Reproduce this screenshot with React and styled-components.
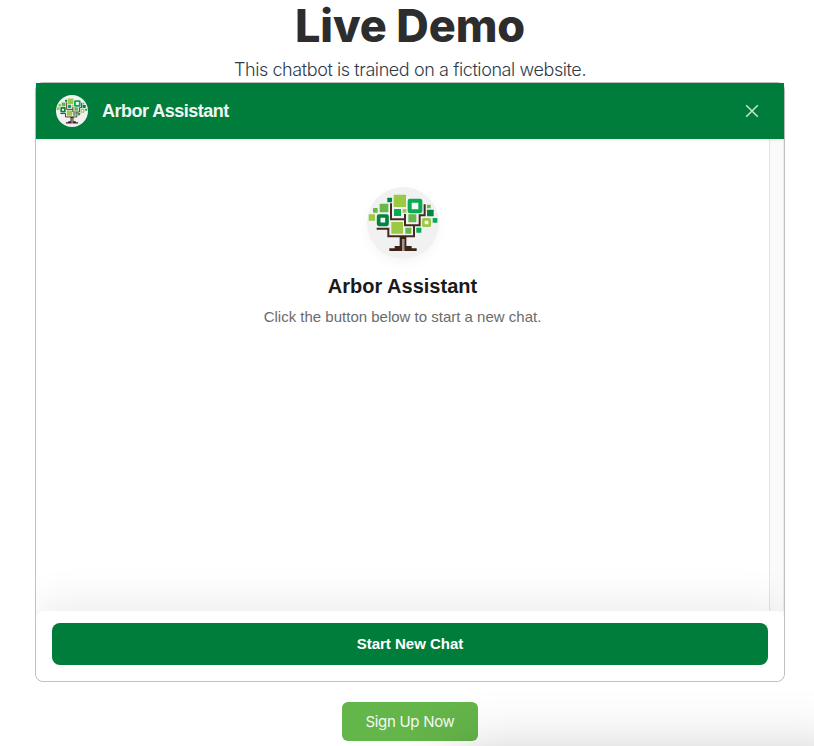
import React from "react";
import styled, { createGlobalStyle } from "styled-components";

const GlobalStyle = createGlobalStyle`
  * { box-sizing: border-box; }
  html, body { margin: 0; padding: 0; background: #fff; overflow: hidden; }
  h1, h2, p { margin: 0; }
  button { border: 0; padding: 0; font: inherit; cursor: pointer; }
`;

const Page = styled.main`
  height: 746px;
  width: 814px;
  overflow: hidden;
  position: relative;
  display: flex;
  flex-direction: column;
  align-items: center;
  padding-left: 6px;
  font-family: Inter, sans-serif;
`;

const Title = styled.h1`
  height: 52px;
  line-height: 52px;
  font-size: 45px;
  font-weight: 800;
  letter-spacing: -0.1px;
  color: #2d2d2d;
  white-space: nowrap;
`;

const Subtitle = styled.p`
  height: 30px;
  line-height: 35px;
  font-size: 18px;
  font-weight: 300;
  letter-spacing: -0.41px;
  color: #2f3b4b;
  white-space: nowrap;
`;

const Frame = styled.section`
  width: 750px;
  height: 600px;
  flex: none;
  border: 1px solid #c0c0c0;
  border-radius: 8px;
  display: flex;
  flex-direction: column;
  font-family: "Liberation Sans", Arial, sans-serif;
`;

const Header = styled.header`
  height: 56px;
  flex: none;
  padding: 0 25px 0 20px;
  display: flex;
  align-items: center;
  gap: 14px;
  background: #007d3a;
  box-shadow: 0 1px 3px rgba(0, 0, 0, 0.1);
  z-index: 1;
`;

const HeaderTitle = styled.h2`
  flex: 1;
  font-size: 18px;
  line-height: 24px;
  letter-spacing: -0.5px;
  font-weight: 700;
  color: #f0f6f2;
`;

const CloseButton = styled.button`
  width: 14px;
  height: 14px;
  background: none;
  display: flex;
`;

const Logo = styled.svg`
  display: block;
  flex: none;
  width: ${(p) => p.$size}px;
  height: ${(p) => p.$size}px;
  border-radius: 50%;
  box-shadow: ${(p) => (p.$raised ? "0 4px 12px rgba(0, 0, 0, 0.04)" : "none")};
`;

const Body = styled.div`
  flex: 1;
  display: flex;
  overflow: hidden;
`;

const Welcome = styled.div`
  flex: 1;
  display: flex;
  flex-direction: column;
  align-items: center;
  padding-top: 48px;
`;

const WelcomeTitle = styled.h2`
  margin-top: 15px;
  font-size: 20px;
  line-height: 24px;
  font-weight: 700;
  color: #1a1a1a;
`;

const WelcomeText = styled.p`
  margin-top: 9px;
  font-size: 15px;
  line-height: 20px;
  color: #6b6b6b;
`;

const ScrollTrack = styled.div`
  width: 15px;
  background: #fafafa;
  border-left: 1px solid #e4e4e4;
  border-right: 1px solid #ececec;
`;

const Footer = styled.footer`
  height: 70px;
  flex: none;
  padding: 12px 16px;
  background: #fff;
  border-radius: 8px;
  box-shadow: 0 -8px 40px rgba(0, 0, 0, 0.08);
  clip-path: inset(-60px 0 0 0);
`;

const StartButton = styled.button`
  width: 100%;
  height: 42px;
  padding-bottom: 2px;
  border-radius: 8px;
  background: #007d3a;
  color: #fff;
  font-size: 15px;
  font-weight: 700;
`;

const SignUpButton = styled.button`
  flex: none;
  width: 136px;
  height: 39px;
  margin-top: 20px;
  border-radius: 6px;
  background: #64b54a;
  color: #f4faf2;
  font-size: 15px;
  letter-spacing: -0.3px;
`;

const DockShadow = styled.div`
  position: absolute;
  left: 454px;
  top: 756px;
  width: 400px;
  height: 200px;
  box-shadow: 0 0 60px rgba(0, 0, 0, 0.24);
  pointer-events: none;
`;

const squares = [
  [82, 53, 14, "#00843f"], [101, 44, 37, "#9bc944"], [59, 71, 26, "#68b74b"],
  [39, 84, 14, "#68b74b"], [26, 103, 19, "#9bc944"], [102, 87, 21, "#08ab50"],
  [128, 87, 11, "#9bc944"], [145, 103, 24, "#68b74b"], [201, 74, 11, "#68b74b"],
  [201, 89, 20, "#00843f"], [218, 114, 14, "#08ab50"], [94, 126, 35, "#9bc944"],
  [136, 143, 18, "#68b74b"], [169, 143, 15, "#08ab50"],
];

const hollow = [
  [149, 62, 32, 12, "#08ab50"],
  [56, 108, 25, 11, "#00843f"],
  [190, 118, 19, 8, "#9bc944"],
];

function TreeLogo({ size, raised }) {
  return (
    <Logo $size={size} $raised={raised} viewBox="21 21 216 216" aria-hidden="true">
      <rect x="21" y="21" width="216" height="216" fill="#f1f1f1" />
      <g fill="none" stroke="#432b1d" strokeWidth="6">
        <path d="M93 70V118H135M135 102V136H179V106H194V73M50 146H85V169H162V137" />
      </g>
      <path d="M126 176H133V213H126Z" fill="#a0958e" />
      <path d="M119 169H139V198H155V205H170V213H133V177H126V213H88V205H104V198H119Z" fill="#3b2416" />
      {squares.map(([x, y, s, fill]) => (
        <rect key={`${x}-${y}`} x={x} y={y} width={s} height={s} rx="1.5" fill={fill} />
      ))}
      {hollow.map(([x, y, s, w, stroke]) => (
        <rect key={`${x}-${y}`} x={x} y={y} width={s} height={s} rx="1" fill="#f7f7f7" stroke={stroke} strokeWidth={w} />
      ))}
    </Logo>
  );
}

export default function App() {
  return (
    <>
      <GlobalStyle />
      <Page>
        <Title>Live Demo</Title>
        <Subtitle>This chatbot is trained on a fictional website.</Subtitle>
        <Frame>
          <Header>
            <TreeLogo size={32} />
            <HeaderTitle>Arbor Assistant</HeaderTitle>
            <CloseButton aria-label="Close">
              <svg width="14" height="14" viewBox="0 0 14 14">
                <path d="M1.2 1.2L12.8 12.8M12.8 1.2L1.2 12.8" stroke="#cce5d8" strokeWidth="1.5" />
              </svg>
            </CloseButton>
          </Header>
          <Body>
            <Welcome>
              <TreeLogo size={72} raised />
              <WelcomeTitle>Arbor Assistant</WelcomeTitle>
              <WelcomeText>Click the button below to start a new chat.</WelcomeText>
            </Welcome>
            <ScrollTrack />
          </Body>
          <Footer>
            <StartButton>Start New Chat</StartButton>
          </Footer>
        </Frame>
        <SignUpButton>Sign Up Now</SignUpButton>
        <DockShadow />
      </Page>
    </>
  );
}
